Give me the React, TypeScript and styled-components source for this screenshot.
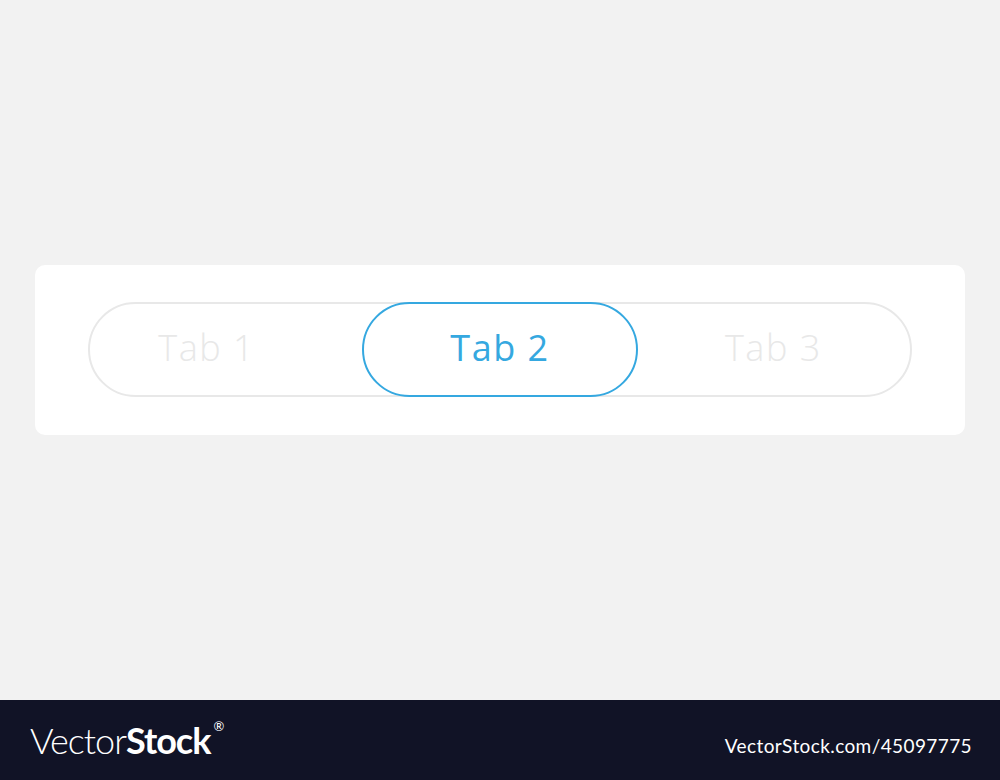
import React, { useState } from 'react'
import styled, { createGlobalStyle } from 'styled-components'

const GlobalStyle = createGlobalStyle`
  html, body {
    margin: 0;
    padding: 0;
    background: #f2f2f2;
  }
  body {
    font-family: 'Open Sans', 'Liberation Sans', sans-serif;
  }
`

const tabs = ['Tab 1', 'Tab 2', 'Tab 3']

export default function App() {
  const [active, setActive] = useState(1)

  return (
    <>
      <GlobalStyle />
      <Page>
        <Stage>
          <Card>
            <TabBar>
              {tabs.map((label, i) => (
                <Tab
                  key={label}
                  $active={i === active}
                  $first={i === 0}
                  onClick={() => setActive(i)}
                >
                  {label}
                </Tab>
              ))}
            </TabBar>
          </Card>
        </Stage>
        <Footer>
          <Logo>
            <LogoLight>Vector</LogoLight>
            <LogoBold>Stock</LogoBold>
            <Registered>®</Registered>
          </Logo>
          <FooterLink>VectorStock.com/45097775</FooterLink>
        </Footer>
      </Page>
    </>
  )
}

const Page = styled.div`
  width: 1000px;
  height: 780px;
  display: flex;
  flex-direction: column;
`

const Stage = styled.main`
  height: 700px;
  display: flex;
  align-items: center;
  justify-content: center;
`

const Card = styled.div`
  width: 930px;
  height: 170px;
  box-sizing: border-box;
  padding: 37px 53px;
  background: #ffffff;
  border-radius: 10px;
`

const TabBar = styled.div`
  display: grid;
  grid-template-columns: repeat(3, 1fr);
  height: 95px;
  box-sizing: border-box;
  border: 2px solid #e8e8e8;
  border-radius: 48px;
`

const Tab = styled.button<{ $active: boolean; $first: boolean }>`
  margin: -2px ${p => (p.$active ? '-1px' : '0')};
  display: flex;
  align-items: center;
  justify-content: center;
  background: transparent;
  border: 2px solid ${p => (p.$active ? '#35a8e0' : 'transparent')};
  border-radius: 48px;
  font-family: 'Open Sans', 'Liberation Sans', sans-serif;
  font-size: 36px;
  font-weight: ${p => (p.$active ? 400 : 300)};
  color: ${p => (p.$active ? '#35a8e0' : '#e8e8e8')};
  letter-spacing: 1.5px;
  cursor: pointer;
  padding: 0 ${p => (p.$first ? '40px' : '0')} 4px 0;
`

const Footer = styled.footer`
  height: 80px;
  background: #111326;
  display: flex;
  align-items: center;
  justify-content: space-between;
  padding: 0 28px 0 30px;
`

const Logo = styled.div`
  display: flex;
  align-items: flex-start;
  color: #ffffff;
  font-family: 'Lato', 'Open Sans', sans-serif;
  font-size: 36px;
  letter-spacing: -1px;
  line-height: 1;
`

const LogoLight = styled.span`
  font-weight: 300;
`

const LogoBold = styled.span`
  font-weight: 700;
`

const Registered = styled.span`
  font-size: 13px;
  margin-left: 3px;
  margin-top: -2px;
  letter-spacing: 0;
`

const FooterLink = styled.span`
  margin-top: 10px;
  color: #ffffff;
  font-family: 'Lato', 'Open Sans', sans-serif;
  font-size: 19px;
  font-weight: 400;
  letter-spacing: 0.4px;
`
